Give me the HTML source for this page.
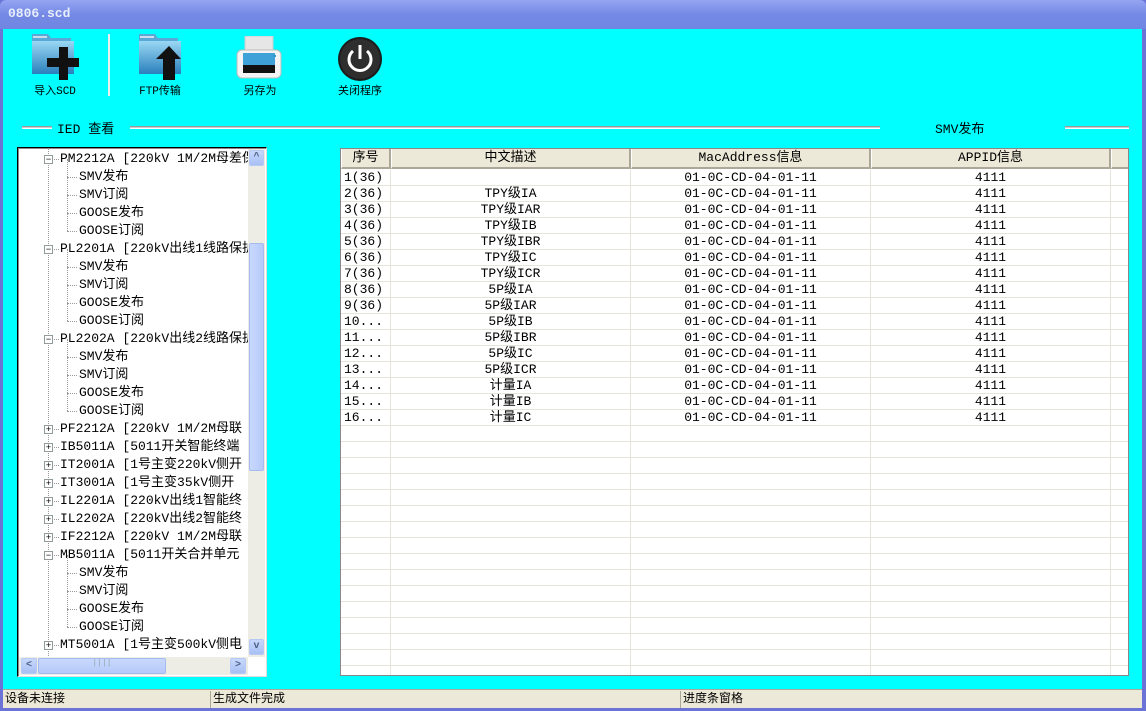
<!DOCTYPE html>
<html><head><meta charset="utf-8"><style>
*{margin:0;padding:0;box-sizing:border-box}
body{width:1146px;height:711px;overflow:hidden;background:#6b74d6;position:relative;font-family:"Liberation Mono","Noto Sans CJK SC",monospace;font-size:13px;color:#000}
.a{position:absolute}
#title{left:0;top:0;width:1146px;height:29px;background:linear-gradient(#95a5f2,#7489e4 50%,#7086e2);border-radius:6px 6px 0 0}
#title span{position:absolute;left:8px;top:6px;color:#e8eefc;font-weight:bold;font-size:13px}
#body{left:3px;top:29px;width:1139px;height:660px;background:#00ffff}
.tb{font-size:11px;text-align:center;width:80px}
.tree{left:17px;top:147px;width:250px;height:530px;border:1px solid #000;background:#fff;border-right-color:#ddd;border-bottom-color:#ddd;box-shadow:inset 1px 1px 0 #888}
.tr{position:absolute;height:18px;line-height:18px;white-space:nowrap;overflow:hidden}
.exp{position:absolute;width:9px;height:9px;border:1px solid #919b9c;background:#fff;font-size:9px;line-height:7px;text-align:center;font-family:"Liberation Sans",sans-serif}
.sb{background:#eeede5}
.btn{position:absolute;width:15px;height:16px;background:linear-gradient(#c7d8fc,#a8c0f4);border:1px solid #b6c8f4;border-radius:2px;color:#4d6185;font-size:10px;text-align:center;line-height:14px;font-weight:bold}
.grid{left:340px;top:148px;width:789px;height:528px;background:#fff;border:1px solid #888;overflow:hidden}
.hd{position:absolute;top:0;height:20px;background:#ece9d8;border-right:2px solid #aca899;border-bottom:2px solid #aca899;border-left:1px solid #fff;text-align:center;line-height:18px}
.row{position:absolute;left:0;width:789px;height:16px;border-bottom:1px solid #e6e3da;line-height:16px}
.row div{position:absolute;top:0;height:16px;border-right:1px solid #e6e3da;text-align:center;overflow:hidden;white-space:nowrap}
#status{left:3px;top:689px;width:1139px;height:19px;background:#ece9d8;border-top:1px solid #aca899;font-size:12px}
#status div{position:absolute;top:1px;height:17px;line-height:17px;border-left:1px solid #aca899;padding-left:2px}
.ln{height:3px;border-top:1px solid #999;border-bottom:1px solid #fff;background:#ccc}
</style></head><body>
<div id="title" class="a"><span>0806.scd</span></div>
<div id="body" class="a"></div>

<svg class="a" style="left:30px;top:32px" width="50" height="50" viewBox="0 0 50 50">
<defs><linearGradient id="fg" x1="0" y1="0" x2="0" y2="1"><stop offset="0" stop-color="#9ad8f4"/><stop offset="1" stop-color="#2a7fbc"/></linearGradient></defs>
<path d="M2 2h16l3 4h20v34H2z" fill="#5aa8d6"/><rect x="3" y="4" width="14" height="2" fill="#cde"/>
<rect x="2" y="9" width="42" height="33" fill="url(#fg)"/>
<path d="M29 15h9v11h11v9H38v13h-9V35H17v-9h12z" fill="#111"/></svg>
<div class="a" style="left:108px;top:34px;width:2px;height:62px;background:#eee"></div>
<svg class="a" style="left:137px;top:32px" width="50" height="50" viewBox="0 0 50 50">
<path d="M2 2h16l3 4h20v34H2z" fill="#5aa8d6"/><rect x="3" y="4" width="14" height="2" fill="#cde"/>
<rect x="2" y="9" width="42" height="33" fill="url(#fg)"/>
<path d="M32 14l12 13h-6v21h-12V27h-7z" fill="#111"/></svg>
<svg class="a" style="left:236px;top:36px" width="46" height="44" viewBox="0 0 46 44">
<rect x="9" y="0" width="28" height="17" fill="#e6e6e6" stroke="#ccc"/><rect x="1" y="14" width="44" height="28" rx="5" fill="#f4f4f4" stroke="#bbb"/>
<rect x="7" y="17" width="32" height="12" fill="#3ea2d8"/><rect x="7" y="29" width="32" height="8" fill="#111"/><rect x="37" y="19" width="3" height="2" fill="#39c"/></svg>
<svg class="a" style="left:337px;top:36px" width="46" height="46" viewBox="0 0 46 46">
<circle cx="23" cy="23" r="22" fill="#1c1c1c"/><circle cx="23" cy="23" r="20" fill="#2e2e2e"/>
<path d="M16 15a11 11 0 1 0 14 0" fill="none" stroke="#fff" stroke-width="3"/><rect x="21.5" y="9" width="3" height="14" fill="#fff"/></svg>
<div class="a tb" style="left:15px;top:82px">导入SCD</div>
<div class="a tb" style="left:120px;top:82px">FTP传输</div>
<div class="a tb" style="left:220px;top:82px">另存为</div>
<div class="a tb" style="left:320px;top:82px">关闭程序</div>

<div class="a ln" style="left:22px;top:126px;width:30px"></div>
<div class="a" style="left:57px;top:118px;font-size:13px">IED 查看</div>
<div class="a ln" style="left:130px;top:126px;width:750px"></div>
<div class="a" style="left:935px;top:118px;font-size:13px">SMV发布</div>
<div class="a ln" style="left:1065px;top:126px;width:64px"></div>

<div class="a tree">
<div class="a" style="left:30px;top:0;height:510px;border-left:1px dotted #999"></div>
<div id="tr"></div>
<div class="a sb" style="left:230px;top:1px;width:17px;height:508px"></div>
<div class="btn" style="left:231px;top:2px">^</div>
<div class="a" style="left:231px;top:95px;width:15px;height:228px;background:linear-gradient(90deg,#c9d8fc,#b6cafa);border:1px solid #a5baf0;border-radius:2px"></div>
<div class="btn" style="left:231px;top:491px">v</div>
<div class="a sb" style="left:1px;top:509px;width:229px;height:18px"></div>
<div class="btn" style="left:3px;top:510px;width:16px">&lt;</div>
<div class="a" style="left:20px;top:510px;width:128px;height:16px;background:linear-gradient(#c9d8fc,#b6cafa);border:1px solid #a5baf0;border-radius:2px;font-size:8px;text-align:center;color:#8aa">||||</div>
<div class="btn" style="left:212px;top:510px;width:16px">&gt;</div>
</div>

<div class="a grid" id="grid"></div>

<div id="status" class="a">
<div style="left:0;width:206px;border-left:none">设备未连接</div>
<div style="left:207px;width:470px">生成文件完成</div>
<div style="left:677px;width:462px">进度条窗格</div>
</div>

<script>
var items=[[1,'-','PM2212A [220kV 1M/2M母差保护'],[2,'','SMV发布'],[2,'','SMV订阅'],[2,'','GOOSE发布'],[2,'','GOOSE订阅'],
[1,'-','PL2201A [220kV出线1线路保护'],[2,'','SMV发布'],[2,'','SMV订阅'],[2,'','GOOSE发布'],[2,'','GOOSE订阅'],
[1,'-','PL2202A [220kV出线2线路保护'],[2,'','SMV发布'],[2,'','SMV订阅'],[2,'','GOOSE发布'],[2,'','GOOSE订阅'],
[1,'+','PF2212A [220kV 1M/2M母联'],[1,'+','IB5011A [5011开关智能终端'],[1,'+','IT2001A [1号主变220kV侧开'],[1,'+','IT3001A [1号主变35kV侧开'],
[1,'+','IL2201A [220kV出线1智能终'],[1,'+','IL2202A [220kV出线2智能终'],[1,'+','IF2212A [220kV 1M/2M母联'],[1,'-','MB5011A [5011开关合并单元'],
[2,'','SMV发布'],[2,'','SMV订阅'],[2,'','GOOSE发布'],[2,'','GOOSE订阅'],[1,'+','MT5001A [1号主变500kV侧电']];
var h='';items.forEach(function(it,i){var y=2+18*i;
if(it[0]==1){h+='<div class="exp" style="left:26px;top:'+(y+5)+'px">'+(it[1]=='-'?'−':'+')+'</div><div class="a" style="left:36px;top:'+(y+9)+'px;width:5px;border-top:1px dotted #999"></div><div class="tr" style="left:42px;top:'+y+'px;width:188px">'+it[2]+'</div>';}
else{h+='<div class="a" style="left:49px;top:'+(y-9)+'px;height:18px;border-left:1px dotted #999"></div><div class="a" style="left:49px;top:'+(y+9)+'px;width:10px;border-top:1px dotted #999"></div><div class="tr" style="left:61px;top:'+y+'px">'+it[2]+'</div>';}
});document.getElementById('tr').innerHTML=h;
var cols=[[0,50],[50,240],[290,240],[530,240],[770,19]];
var g='';var hs=['序号','中文描述','MacAddress信息','APPID信息',''];
cols.forEach(function(c,i){g+='<div class="hd" style="left:'+c[0]+'px;width:'+c[1]+'px">'+hs[i]+'</div>';});
var d=['','TPY级IA','TPY级IAR','TPY级IB','TPY级IBR','TPY级IC','TPY级ICR','5P级IA','5P级IAR','5P级IB','5P级IBR','5P级IC','5P级ICR','计量IA','计量IB','计量IC'];
for(var r=0;r<32;r++){var y=21+16*r;g+='<div class="row" style="top:'+y+'px">';
var v=r<16?[(r<9?(r+1)+'(36)':(r+1)+'...'),d[r],'01-0C-CD-04-01-11','4111','']:['','','','',''];
cols.forEach(function(c,i){g+='<div style="left:'+c[0]+'px;width:'+c[1]+'px;'+(i==0?'text-align:left;padding-left:3px':'')+'">'+v[i]+'</div>';});g+='</div>';}
document.getElementById('grid').innerHTML=g;
</script>
</body></html>
